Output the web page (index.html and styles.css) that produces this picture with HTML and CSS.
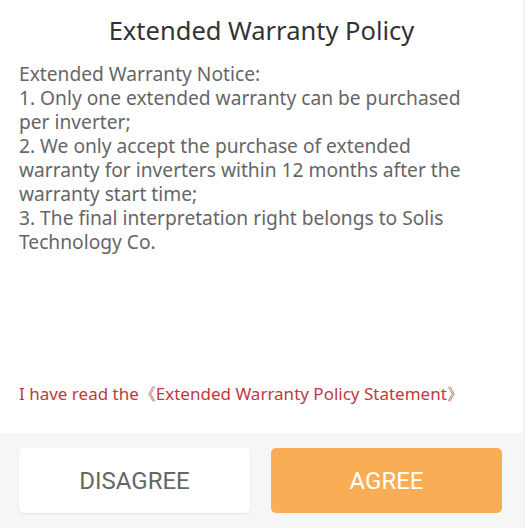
FILE: index.html
```html
<!DOCTYPE html>
<html>
<head>
<meta charset="utf-8">
<link rel="stylesheet" href="styles.css">
</head>
<body>
<div class="dialog">
  <div class="content">
    <h1 class="title">Extended Warranty Policy</h1>
    <div class="notice">Extended Warranty Notice:<br>1. Only one extended warranty can be purchased per inverter;<br>2. We only accept the purchase of extended warranty for inverters within 12 months after the warranty start time;<br>3. The final interpretation right belongs to Solis Technology Co.</div>
    <div class="spacer"></div>
    <div class="read">I have read the《Extended Warranty Policy Statement》</div>
  </div>
  <div class="footer">
    <button class="btn btn-disagree">DISAGREE</button>
    <button class="btn btn-agree">AGREE</button>
  </div>
</div>
</body>
</html>
```
FILE: styles.css
```css
html, body {
  margin: 0;
  padding: 0;
  background: #ffffff;
}
body {
  width: 525px;
  height: 528px;
  overflow: hidden;
  font-family: "Noto Sans", Roboto, sans-serif;
}
.dialog {
  width: 523px;
  height: 528px;
  display: flex;
  flex-direction: column;
  border-right: 2px solid #f2f2f2;
}
.content {
  flex: 1;
  display: flex;
  flex-direction: column;
  padding: 0 19px;
}
.title {
  margin: 13px 0 0;
  font-size: 25.5px;
  font-weight: 400;
  color: #333333;
  text-align: center;
  line-height: 34px;
}
.notice {
  margin-top: 15px;
  padding-right: 18px;
  font-size: 19.2px;
  line-height: 24px;
  color: #666666;
}
.spacer {
  flex: 1;
}
.read {
  font-size: 17px;
  line-height: 24px;
  color: #c0393b;
  margin-bottom: 27px;
}
.footer {
  height: 95px;
  background: #f6f6f6;
  display: flex;
  gap: 21px;
  padding: 15px 21px 0 19px;
  box-sizing: border-box;
}
.btn {
  width: 231px;
  height: 65px;
  border: none;
  border-radius: 5px;
  font-family: Roboto, "Noto Sans", sans-serif;
  font-size: 24px;
  padding: 0;
}
.btn-disagree {
  background: #ffffff;
  color: #666666;
  box-shadow: 0 1px 2px rgba(0,0,0,0.08);
}
.btn-agree {
  background: #fbad55;
  color: #ffffff;
}
```
